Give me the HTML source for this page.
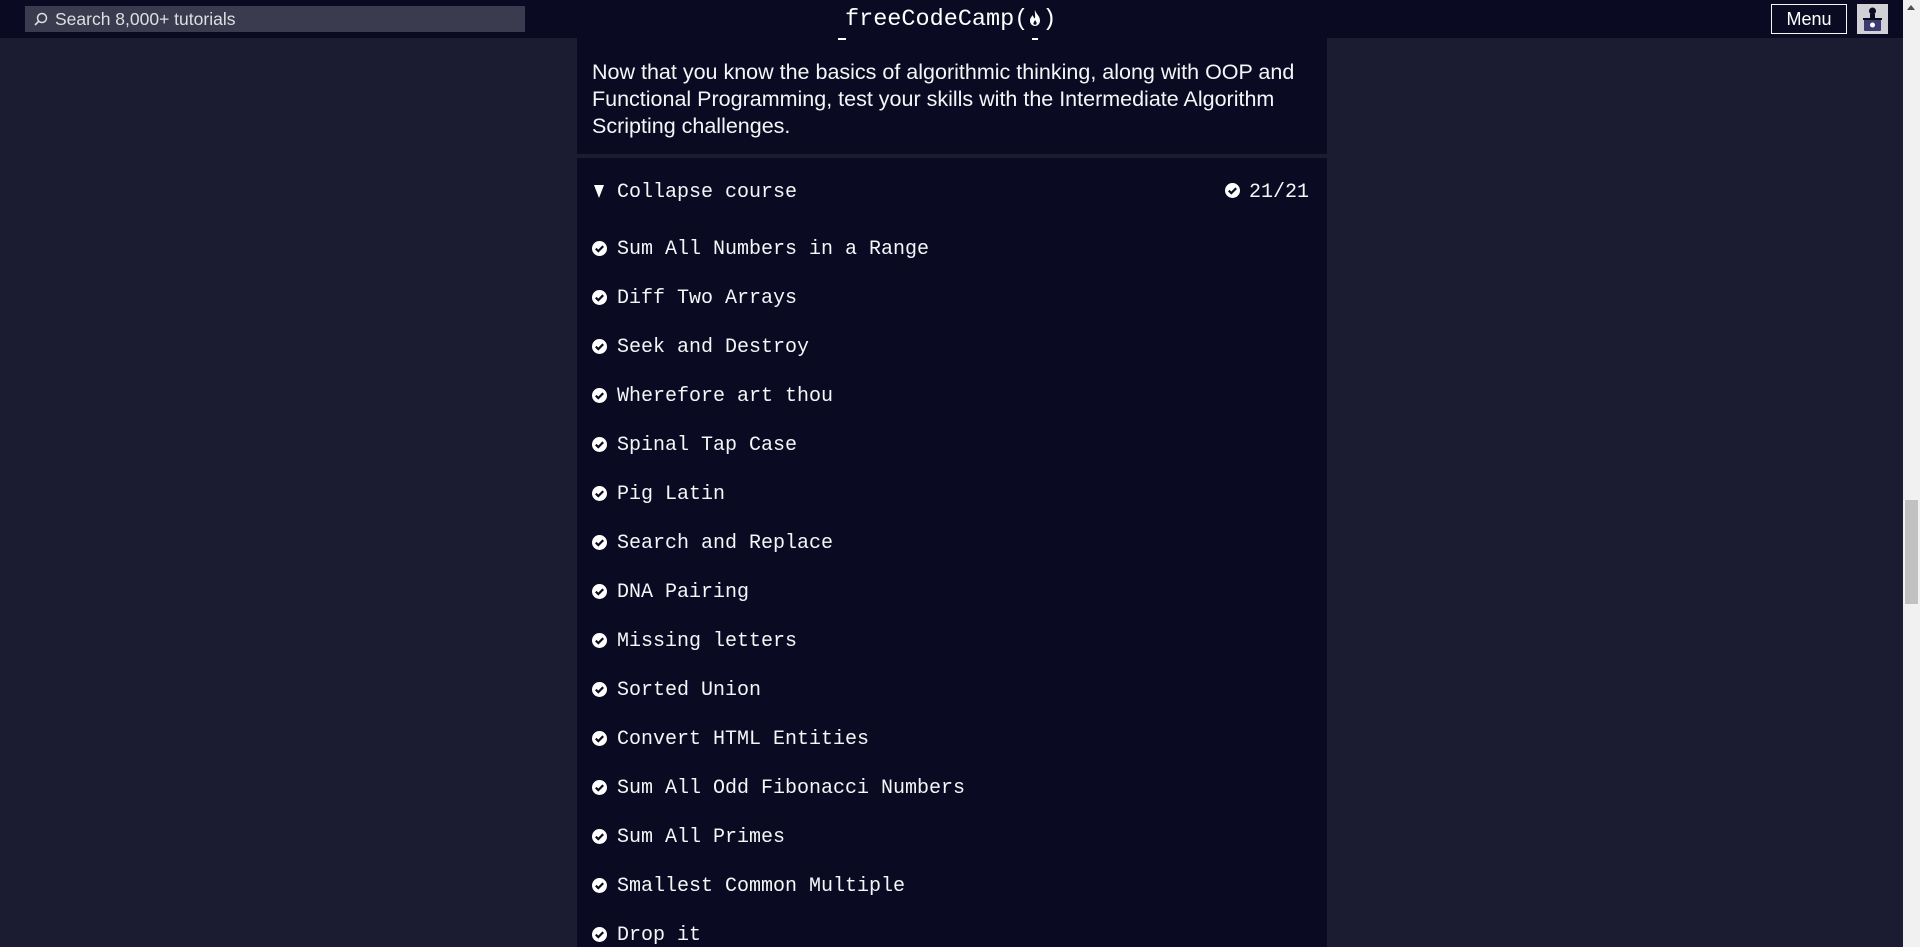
<!DOCTYPE html>
<html><head><meta charset="utf-8">
<style>
*{margin:0;padding:0;box-sizing:border-box}
html,body{width:1920px;height:947px;overflow:hidden;background:#1b1b32}
body{position:relative;font-family:"Liberation Sans",sans-serif;color:#f5f6f7}
.hdr{position:absolute;left:0;top:0;width:1903px;height:38px;background:#0a0a23}
.search{position:absolute;left:25px;top:6px;width:500px;height:26px;background:#3b3b4f;color:#dfdfe2;font-size:17.5px;line-height:26px;padding-left:30px}
.search svg{position:absolute;left:9px;top:6px}
.logo{position:absolute;left:845px;top:5px;font-family:"Liberation Mono",monospace;font-size:23.5px;line-height:30px;color:#fff;white-space:nowrap}
.menu{position:absolute;left:1771px;top:4px;width:76px;height:30px;border:1px solid #f5f6f7;font-size:18px;line-height:28px;text-align:center;color:#fff}
.av{position:absolute;left:1857px;top:4px;width:31px;height:30px;background:#d0d0d5}
.sb{position:absolute;left:1903px;top:0;width:17px;height:947px;background:#f1f1f1}
.thumb{position:absolute;left:1905px;top:500px;width:13px;height:104px;background:#c1c1c1}
.col{position:absolute;left:577px;width:750px;background:#0a0a23}
.desc{top:38px;height:116px;padding:21px 0 0 15px;font-size:21.5px;line-height:27px;white-space:nowrap}
.list{top:158px;height:800px}
.row{position:absolute;left:0;font-family:"Liberation Mono",monospace;font-size:20px;line-height:24px;white-space:nowrap}
.row svg{position:absolute;left:15px;top:5px}
.row span{position:absolute;left:40px;top:0}
</style></head><body>
<div class="hdr">
 <div class="search"><svg width="14" height="14" viewBox="0 0 14 14"><circle cx="8" cy="6" r="4.5" fill="none" stroke="#dfdfe2" stroke-width="1.5"/><line x1="4.8" y1="9.2" x2="1" y2="13" stroke="#dfdfe2" stroke-width="1.6"/></svg>Search 8,000+ tutorials</div>
 <div class="logo">freeCodeCamp(<svg width="14" height="18" viewBox="0 0 14 18" style="vertical-align:-2px"><path d="M7 1C8 5 12 7 12 11.5C12 15 9.5 17 7 17C4.5 17 2 15 2 11.5C2 9 4 7.5 4.5 6C5.5 8 6 9 7 9.5C7.5 7 6.5 3.5 7 1Z" fill="#fff"/><path d="M7 11C8 12.5 9 13.5 8.5 15C8 16 6 16 5.5 15C5.2 14 6 13 7 11Z" fill="#0a0a23"/></svg>)</div>
 <div class="menu">Menu</div>
 <div class="av"><svg width="31" height="30" viewBox="0 0 31 30"><circle cx="15.5" cy="7" r="3.5" fill="#0a0a23"/><rect x="13" y="10" width="5" height="5" fill="#0a0a23"/><rect x="7" y="15" width="17" height="12" rx="1" fill="#3b3b70"/><rect x="6" y="14" width="19" height="2" fill="#0a0a23"/><circle cx="15.5" cy="21" r="2.5" fill="#fff"/></svg></div>
</div>
<div class="col desc">Now that you know the basics of algorithmic thinking, along with OOP and<br>Functional Programming, test your skills with the Intermediate Algorithm<br>Scripting challenges.</div>
<div style="position:absolute;left:838px;top:38px;width:8px;height:2px;background:#fff"></div>
<div style="position:absolute;left:1032px;top:38px;width:6px;height:2px;background:#fff"></div>
<div class="col list">
 <div class="row" style="top:23px"><svg width="10" height="13" viewBox="0 0 10 13" style="left:17px;top:4px"><path d="M0 0L10 0L5 13Z" fill="#fff"/></svg><span>Collapse course</span></div>
 <div class="row" style="top:23px;left:648px"><svg width="15" height="15" viewBox="0 0 15 15" style="left:0;top:2px"><circle cx="7.5" cy="7.5" r="7.5" fill="#fff"/><path d="M3.8 7.6L6.3 10.1L11.2 5.2" fill="none" stroke="#0a0a23" stroke-width="2.2"/></svg><span style="left:24px">21/21</span></div>
</div>
<div id="items"></div>
<script>
var t=["Sum All Numbers in a Range","Diff Two Arrays","Seek and Destroy","Wherefore art thou","Spinal Tap Case","Pig Latin","Search and Replace","DNA Pairing","Missing letters","Sorted Union","Convert HTML Entities","Sum All Odd Fibonacci Numbers","Sum All Primes","Smallest Common Multiple","Drop it"];
var h="";for(var i=0;i<t.length;i++){h+='<div class="row" style="left:577px;top:'+(238+i*49)+'px"><svg width="15" height="15" viewBox="0 0 15 15" style="top:3px"><circle cx="7.5" cy="7.5" r="7.5" fill="#fff"/><path d="M3.8 7.6L6.3 10.1L11.2 5.2" fill="none" stroke="#0a0a23" stroke-width="2.2"/></svg><span>'+t[i]+'</span></div>';}
document.getElementById("items").innerHTML=h;
</script>
<div class="sb"></div><div class="thumb"></div>
<div style="position:absolute;left:1907px;top:5px;width:0;height:0;border-left:4px solid transparent;border-right:4px solid transparent;border-bottom:5px solid #505050"></div>
</body></html>
